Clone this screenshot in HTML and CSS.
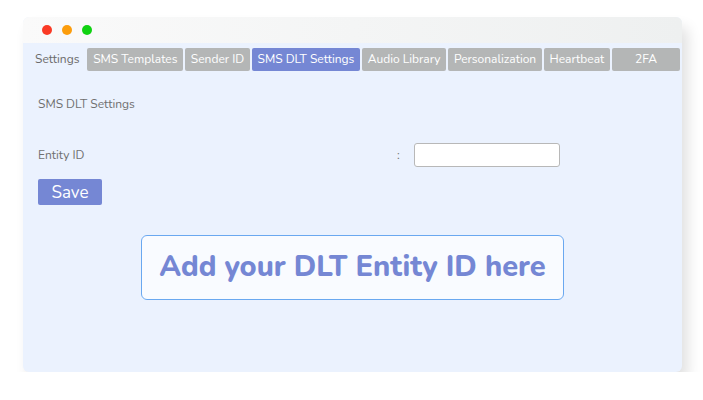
FILE: index.html
```html
<!DOCTYPE html>
<html>
<head>
<link rel="stylesheet" href="styles.css">
</head>
<body>

<div class="window">
  <div class="titlebar">
    <span class="dot red"></span>
    <span class="dot orange"></span>
    <span class="dot green"></span>
  </div>

  <div class="content">
    <ul class="tabs">
      <li class="tab plain">Settings</li>
      <li class="tab">SMS Templates</li>
      <li class="tab">Sender ID</li>
      <li class="tab active">SMS DLT Settings</li>
      <li class="tab">Audio Library</li>
      <li class="tab">Personalization</li>
      <li class="tab">Heartbeat</li>
      <li class="tab wide">2FA</li>
    </ul>

    <div class="panel">
      <h2>SMS DLT Settings</h2>
      <div class="field">
        <label>Entity ID</label>
        <span class="colon">:</span>
        <input type="text" class="textbox">
      </div>
      <button class="save">Save</button>

      <div class="callout">Add your DLT Entity ID here</div>
    </div>
  </div>
</div>

</body>
</html>
```

FILE: styles.css
```css
body {
    margin: 0;
    background: #ffffff;
    font-family: "Nunito", "Lato", "Open Sans", sans-serif;
}

.window {
    margin: 17px 0 0 23px;
    width: 659px;
    height: 355px;
    border-radius: 6px;
    overflow: hidden;
    background: #ebf2fe;
    box-shadow: 6px 10px 14px rgba(0, 0, 0, 0.12);
}

.titlebar {
    height: 26px;
    display: flex;
    align-items: center;
    gap: 10px;
    padding-left: 19px;
    background: linear-gradient(to right, #fafafa, #eef0f0);
}

.dot {
    width: 10px;
    height: 10px;
    border-radius: 50%;
}
.red { background: #fa3a25; }
.orange { background: #fc9d0c; }
.green { background: #10d212; }

.content {
    padding: 5px 2px 0 6px;
}

.tabs {
    list-style: none;
    margin: 0;
    padding: 0;
    display: flex;
    gap: 2px;
}

.tab {
    height: 23px;
    line-height: 23px;
    padding: 0 5.7px;
    font-size: 12px;
    color: #ffffff;
    background: #b4b6b6;
    border-radius: 2px;
    text-align: center;
}
.tab.plain {
    background: transparent;
    color: #6b6b6b;
    padding: 0 6px;
}
.tab.active {
    background: #7587d4;
}
.tab.wide {
    flex: 1;
}

.panel {
    padding: 0 0 0 9px;
}

.panel h2 {
    margin: 25px 0 0;
    font-size: 12px;
    font-weight: normal;
    color: #707070;
}

.field {
    display: flex;
    align-items: center;
    margin-top: 31px;
}
.field label {
    width: 359px;
    font-size: 12px;
    color: #707070;
}
.colon {
    width: 17px;
    font-size: 12px;
    color: #707070;
}
.textbox {
    box-sizing: border-box;
    width: 146px;
    height: 24px;
    margin: 0;
    padding: 1px;
    border: 1px solid #b8b8b8;
    border-radius: 3px;
    background: #ffffff;
}

.save {
    display: block;
    margin-top: 12px;
    width: 64px;
    height: 26px;
    border: 0;
    border-radius: 2px;
    background: #7587d4;
    color: #ffffff;
    font-family: inherit;
    font-size: 17px;
}

.callout {
    box-sizing: border-box;
    margin: 30px 0 0 103px;
    width: 423px;
    height: 65px;
    line-height: 62px;
    border: 1px solid #6aa8f0;
    border-radius: 6px;
    background: #f9fbff;
    text-align: center;
    font-size: 29px;
    font-weight: 800;
    color: #7587d4;
}
```
